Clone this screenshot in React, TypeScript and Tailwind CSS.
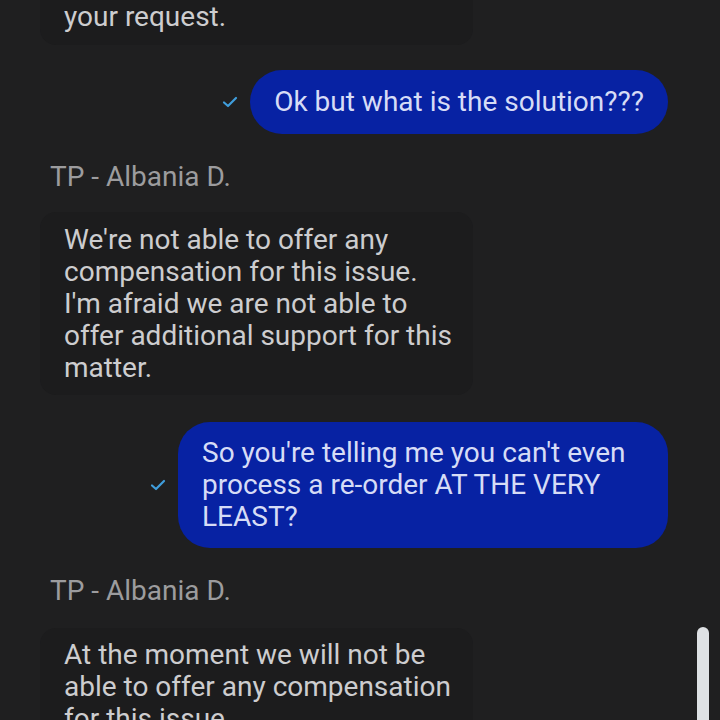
const Check = () => (
  <svg width="16" height="12" viewBox="0 0 16 12" className="shrink-0">
    <path d="M2 6.5 L6 10 L14 2" fill="none" stroke="#3f9ddb" strokeWidth="2.2" strokeLinecap="round" strokeLinejoin="round" />
  </svg>
);

const AgentBubble = ({ children, className = '' }: { children: React.ReactNode; className?: string }) => (
  <div className={`ml-[40px] w-[433px] rounded-2xl bg-[#1c1c1d] pl-6 pr-4 text-[28px] leading-[32px] text-[#cdcdcf] whitespace-pre-line ${className}`}>
    {children}
  </div>
);

const UserBubble = ({ children, className = '' }: { children: React.ReactNode; className?: string }) => (
  <div className={`mr-[52px] flex items-center justify-end gap-3 ${className}`}>
    <Check />
    <div className="max-w-[490px] rounded-[32px] bg-[#0722a3] px-6 text-[28px] leading-[32px] text-[#d6dcf6]">
      {children}
    </div>
  </div>
);

const Name = ({ className = '' }: { className?: string }) => (
  <div className={`ml-[50px] text-[28px] leading-[32px] text-[#9c9c9e] ${className}`}>TP - Albania D.</div>
);

export default function App() {
  return (
    <div className="relative h-[720px] w-[720px] overflow-hidden bg-[#1f1f20]" style={{ fontFamily: 'Roboto, "Noto Sans", sans-serif' }}>
      <div className="flex flex-col mt-[-43px]">
        <AgentBubble className="pt-3 pb-3">
          {'we are unable to process\nyour request.'}
        </AgentBubble>
        <UserBubble className="mt-[25px]">
          <div className="py-4">Ok but what is the solution???</div>
        </UserBubble>
        <Name className="mt-[27px]" />
        <AgentBubble className="mt-[19px] pt-3 pb-[11px]">
          {"We're not able to offer any compensation for this issue.\nI'm afraid we are not able to offer additional support for this matter."}
        </AgentBubble>
        <UserBubble className="mt-[27px]">
          <div className="py-[15px]">So you're telling me you can't even process a re-order AT THE VERY LEAST?</div>
        </UserBubble>
        <Name className="mt-[27px]" />
        <AgentBubble className="mt-[21px] pt-[11px] pb-3">
          {'At the moment we will not be able to offer any compensation for this issue.'}
        </AgentBubble>
      </div>
      <div className="absolute left-[697px] top-[627px] h-[120px] w-[12px] rounded-full bg-[#dee1e4]" />
    </div>
  );
}
